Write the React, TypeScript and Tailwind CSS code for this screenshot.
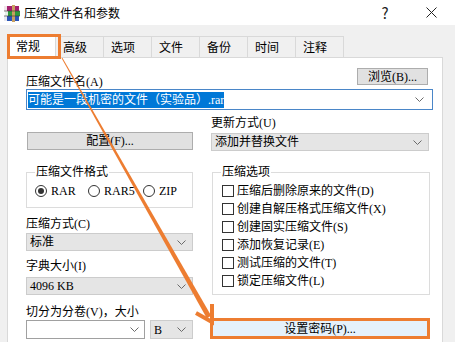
import { FC, ReactNode } from "react"

const Chevron: FC<{ className?: string }> = ({ className = "" }) => (
    <svg width="9" height="5" viewBox="0 0 9 5" className={className}>
        <path d="M0.5 0.5L4.5 4.5L8.5 0.5" fill="none" stroke="#6a6a6a" strokeWidth="1" />
    </svg>
)

const RarIcon: FC = () => (
    <svg width="18" height="18" viewBox="0 0 18 18">
        <rect x="1" y="12" width="15" height="5" fill="#2b55b5" />
        <rect x="1" y="12" width="3" height="5" fill="#e8e8f0" />
        <rect x="2" y="7" width="15" height="5" fill="#2f9a3c" />
        <rect x="2" y="7" width="3" height="5" fill="#e8f0e8" />
        <rect x="1" y="2" width="15" height="5" fill="#a3216e" />
        <rect x="1" y="2" width="3" height="5" fill="#f0e4ea" />
        <rect x="9" y="1" width="3" height="17" fill="#c8a060" />
        <path d="M1 7h16M1 12h16" stroke="#333" strokeWidth="0.6" />
    </svg>
)

const Tab: FC<{ label: string; active?: boolean }> = ({ label, active }) =>
    active ? (
        <div className="relative z-10 -mb-px flex h-[24px] w-[48px] items-start border border-b-0 border-[#d9d9d9] bg-white pl-[7px] pt-[4px] leading-[14px]">
            {label}
            <div className="absolute -left-[2px] -top-[1px] h-[25px] w-[54px] border-[3px] border-[#ed7d31]" />
        </div>
    ) : (
        <div className="-ml-px flex h-[21px] w-[49px] items-center border border-b-0 border-[#d9d9d9] bg-[#f0f0f0] pl-[7px] leading-[14px]">
            {label}
        </div>
    )

const Combo: FC<{ children?: ReactNode; className?: string }> = ({ children, className = "" }) => (
    <div className={`flex h-[18px] items-center justify-between border border-[#cccccc] bg-[#e5e5e5] pl-[3px] pr-[6px] leading-[14px] ${className}`}>
        <span>{children}</span>
        <Chevron />
    </div>
)

const Radio: FC<{ label: string; checked?: boolean; className?: string }> = ({ label, checked, className = "" }) => (
    <div className={`flex items-center gap-[4px] ${className}`}>
        <div className="flex h-[12px] w-[12px] items-center justify-center rounded-full border border-[#333333] bg-white">
            {checked && <div className="h-[6px] w-[6px] rounded-full bg-[#333333]" />}
        </div>
        <span>{label}</span>
    </div>
)

const Check: FC<{ label: string }> = ({ label }) => (
    <div className="flex h-[18px] items-center gap-[3px]">
        <div className="h-[12px] w-[12px] border border-[#333333] bg-white" />
        <span>{label}</span>
    </div>
)

const options = [
    "压缩后删除原来的文件(D)",
    "创建自解压格式压缩文件(X)",
    "创建固实压缩文件(S)",
    "添加恢复记录(E)",
    "测试压缩的文件(T)",
    "锁定压缩文件(L)",
]

const tabs = ["高级", "选项", "文件", "备份", "时间", "注释"]

export default function App() {
    return (
        <div className="relative h-[342px] w-[455px] overflow-hidden bg-[#f0f0f0] font-['Liberation_Serif','Noto_Sans_CJK_SC',serif] text-[12px] text-black">
            {/* title bar */}
            <div className="flex h-[25px] items-center bg-white">
                <div className="ml-[3px] mt-[1px]">
                    <RarIcon />
                </div>
                <span className="ml-[3px] font-['Noto_Sans_CJK_SC',sans-serif] leading-[14px]">压缩文件名和参数</span>
                <div className="flex-1" />
                <div className="flex w-[46px] justify-center font-['Noto_Sans_CJK_SC',sans-serif] text-[15px] leading-[16px] text-[#222]">?</div>
                <div className="flex w-[47px] justify-center">
                    <svg width="11" height="11" viewBox="0 0 11 11">
                        <path d="M0.5 0.5L10.5 10.5M10.5 0.5L0.5 10.5" stroke="#222" strokeWidth="1" />
                    </svg>
                </div>
            </div>

            {/* tabs */}
            <div className="ml-[8px] mt-[9px] flex h-[23px] items-end font-['Noto_Sans_CJK_SC',sans-serif]">
                <Tab label="常规" active />
                {tabs.map(t => <Tab key={t} label={t} />)}
            </div>

            {/* panel */}
            <div className="ml-[7px] h-[300px] w-[436px] border border-[#d9d9d9] bg-white pl-[18px] pr-[9px] pt-[10px]">
                <div className="flex justify-between">
                    <span className="mt-[7px] leading-[14px]">压缩文件名(A)</span>
                    <div className="mr-[5px] flex h-[17px] w-[71px] items-center justify-center border border-[#adadad] bg-[#e1e1e1] leading-[14px]">浏览(B)...</div>
                </div>
                <div className="flex h-[21px] items-center justify-between border border-[#4a86c8] pl-px pr-[8px]">
                    <span className="bg-[#0078d7] leading-[16px] text-white">可能是一段机密的文件（实验品）.rar</span>
                    <Chevron />
                </div>

                <div className="flex gap-[18px]">
                    {/* left column */}
                    <div className="flex w-[167px] flex-col">
                        <div className="ml-px mt-[22px] flex h-[18px] items-center justify-center border border-[#adadad] bg-[#e1e1e1] leading-[14px]">配置(F)...</div>
                        <fieldset className="mt-[15px] border border-[#dcdcdc] px-[8px] pb-[9px] pt-[5px]">
                            <legend className="px-px leading-[14px]">压缩文件格式</legend>
                            <div className="flex h-[14px] items-center leading-[14px]">
                                <Radio label="RAR" checked className="w-[53px]" />
                                <Radio label="RAR5" className="w-[55px]" />
                                <Radio label="ZIP" />
                            </div>
                        </fieldset>
                        <span className="mt-[8px] leading-[16px]">压缩方式(C)</span>
                        <Combo className="mt-[1px]">标准</Combo>
                        <span className="mt-[7px] leading-[16px]">字典大小(I)</span>
                        <Combo className="mt-[3px]">4096 KB</Combo>
                        <span className="mt-[9px] leading-[16px]">切分为分卷(V)，大小</span>
                        <div className="flex h-[19px] gap-[5px]">
                            <div className="flex w-[119px] items-center justify-end border border-[#a0a0a0] bg-white pr-[5px]">
                                <Chevron />
                            </div>
                            <Combo className="h-[19px] flex-1">B</Combo>
                        </div>
                    </div>

                    {/* right column */}
                    <div className="flex w-[219px] flex-col">
                        <span className="mt-[5px] leading-[16px]">更新方式(U)</span>
                        <Combo className="mr-px mt-[2px]">添加并替换文件</Combo>
                        <fieldset className="ml-px mt-[14px] border border-[#dcdcdc] pb-[4px] pl-[9px] pt-[3px]">
                            <legend className="-ml-px px-px leading-[14px]">压缩选项</legend>
                            {options.map(o => <Check key={o} label={o} />)}
                        </fieldset>
                        <div className="relative ml-px mr-[2px] mt-[25px] flex h-[17px] items-center justify-center border border-[#0078d7] bg-[#e5f1fb] leading-[14px]">
                            设置密码(P)...
                            <div className="absolute -inset-[3px] border-[3px] border-[#ed7d31]" />
                        </div>
                    </div>
                </div>
            </div>

            {/* annotation arrow */}
            <svg className="pointer-events-none absolute left-0 top-0" width="455" height="342" viewBox="0 0 455 342">
                <polygon points="62.4,57.7 61.6,58.3 206.8,318.2 211.2,315.8" fill="#ed7d31" />
                <polyline points="196,313 212,322 212,304" fill="none" stroke="#ed7d31" strokeWidth="4" strokeLinejoin="miter" />
            </svg>
        </div>
    )
}
